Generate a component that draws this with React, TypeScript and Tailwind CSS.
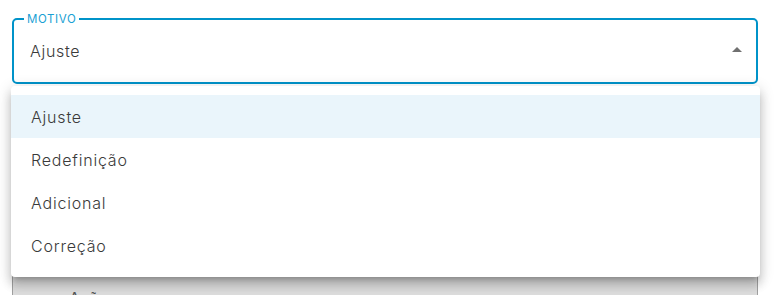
import React from "react";

const items = ["Ajuste", "Redefinição", "Adicional", "Correção"];

export default function App() {
  return (
    <div
      className="relative w-[775px] h-[295px] overflow-hidden bg-white"
      style={{ fontFamily: "Inter, 'Noto Sans', sans-serif" }}
    >
      <div className="pt-[18px] pl-[12px] flex flex-col gap-[160px]">
        <div className="relative w-[746px] h-[66px] rounded-[5px] border-2 border-[#0093c9] flex items-center pl-[16px] pr-[14px]">
          <span className="absolute left-[10px] -top-[8px] bg-white px-[3px] text-[11.5px] leading-[14px] tracking-[0.6px] text-[#1a9fd4]">
            MOTIVO
          </span>
          <span className="flex-1 text-[16px] text-[#3a3a3a] tracking-[0.7px] font-light">Ajuste</span>
          <svg width="10" height="5" viewBox="0 0 10 5" className="mb-[3px]">
            <path d="M0 5 L5 0 L10 5 Z" fill="#707070" />
          </svg>
        </div>
        <div className="w-[746px] h-[90px] rounded-[4px] border border-[#a0a0a0] bg-[#dcdcdc] pl-[56px] pt-[41px]">
          <span className="block text-[16px] leading-[24px] text-[#555]">Ação</span>
        </div>
      </div>

      <div
        className="absolute left-[11px] top-[86px] w-[749px] rounded-[4px] bg-white pt-[9px] pb-[10px]"
        style={{
          boxShadow:
            "0px 5px 5px -3px rgba(0,0,0,0.2), 0px 8px 10px 1px rgba(0,0,0,0.14), 0px 3px 14px 2px rgba(0,0,0,0.12)",
        }}
      >
        {items.map((it, i) => (
          <div
            key={it}
            className={`h-[43px] flex items-center pl-[20px] text-[16px] text-[#3a3a3a] tracking-[0.8px] font-light ${
              i === 0 ? "bg-[#eaf5fb]" : ""
            }`}
          >
            {it}
          </div>
        ))}
      </div>
    </div>
  );
}
